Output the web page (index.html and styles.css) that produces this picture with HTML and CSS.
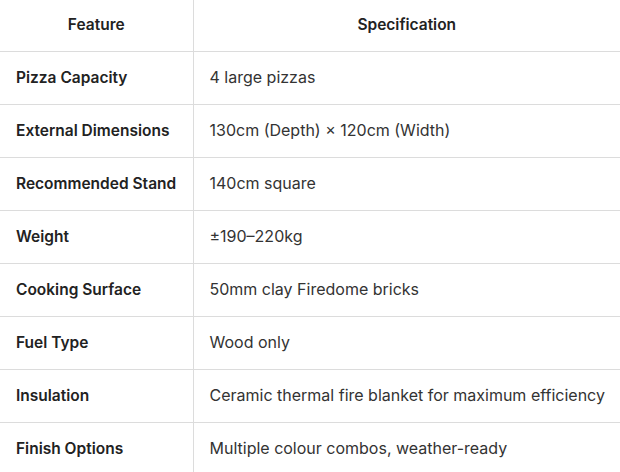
FILE: index.html
```html
<!DOCTYPE html>
<html>
<head>
<meta charset="utf-8">
<link rel="stylesheet" href="styles.css">
</head>
<body>
<table class="spec">
  <thead>
    <tr><th class="col-feature">Feature</th><th>Specification</th></tr>
  </thead>
  <tbody>
    <tr><td class="label">Pizza Capacity</td><td>4 large pizzas</td></tr>
    <tr><td class="label">External Dimensions</td><td>130cm (Depth) × 120cm (Width)</td></tr>
    <tr><td class="label">Recommended Stand</td><td>140cm square</td></tr>
    <tr><td class="label">Weight</td><td>±190–220kg</td></tr>
    <tr><td class="label">Cooking Surface</td><td>50mm clay Firedome bricks</td></tr>
    <tr><td class="label">Fuel Type</td><td>Wood only</td></tr>
    <tr><td class="label">Insulation</td><td>Ceramic thermal fire blanket for maximum efficiency</td></tr>
    <tr><td class="label">Finish Options</td><td>Multiple colour combos, weather-ready</td></tr>
  </tbody>
</table>
</body>
</html>
```
FILE: styles.css
```css
html, body {
  margin: 0;
  padding: 0;
  background: #fff;
}
body {
  font-family: Inter, "Noto Sans", sans-serif;
  color: #333;
  font-size: 16px;
}
.spec {
  width: 620px;
  border-collapse: collapse;
  table-layout: fixed;
}
.col-feature {
  width: 193px;
}
.spec th,
.spec td {
  border-bottom: 1px solid #dcdcdc;
  border-right: 1px solid #dcdcdc;
  padding: 0 16px 2px 16px;
  line-height: 20px;
  text-align: left;
  vertical-align: middle;
  white-space: nowrap;
}
.spec th:last-child,
.spec td:last-child {
  border-right: none;
}
.spec th {
  height: 51px;
  box-sizing: border-box;
  font-size: 15.5px;
  font-weight: 600;
  text-align: center;
  color: #222;
  padding-top: 1px;
}
.spec td {
  height: 53px;
  box-sizing: border-box;
  font-weight: 400;
}
.spec td.label {
  font-size: 15.5px;
  font-weight: 600;
  color: #222;
  padding-top: 2px;
  padding-bottom: 1px;
}
```
